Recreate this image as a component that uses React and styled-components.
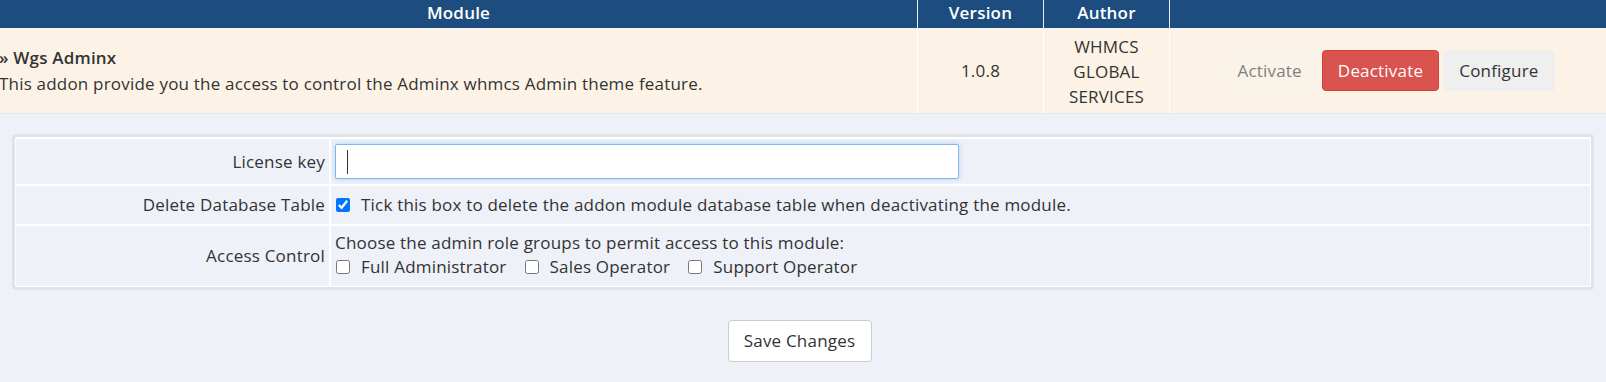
import React from "react";
import styled, { createGlobalStyle } from "styled-components";

const GlobalStyle = createGlobalStyle`
  html, body {
    margin: 0;
    padding: 0;
    background: #eef1f8;
    font-family: "Open Sans", "Liberation Sans", sans-serif;
    font-size: 17px;
    letter-spacing: 0.2px;
    color: #333;
  }
`;

const Page = styled.div`
  width: 1606px;
  overflow: hidden;
`;

const ModuleGrid = styled.div`
  display: grid;
  grid-template-columns: 917px 126px 126px 1fr;
  border-bottom: 1px solid #e6e9ef;
`;

const HeadCell = styled.div`
  background: #1c4d7e;
  color: #fff;
  font-weight: 600;
  text-align: center;
  height: 28px;
  line-height: 26px;
  border-left: ${(p) => (p.first ? "none" : "1px solid #e8edf3")};
  border-bottom: 1px solid #f3f3f3;
`;

const Cell = styled.div`
  background: #fcf3e6;
  height: 84px;
  display: flex;
  flex-direction: column;
  justify-content: center;
  align-items: ${(p) => (p.left ? "flex-start" : "center")};
  text-align: ${(p) => (p.left ? "left" : "center")};
  border-left: ${(p) => (p.left ? "none" : "1px solid #fff")};
  line-height: ${(p) => (p.tight ? "25px" : "26px")};
  padding: ${(p) => (p.left ? "0" : "0 8px")};
  margin-left: ${(p) => (p.left ? "-1px" : "0")};
`;

const Title = styled.div`
  font-weight: 600;
`;

const Actions = styled.div`
  display: flex;
  gap: 4px;
  margin-top: -1px;
`;

const Button = styled.button`
  font-family: inherit;
  font-size: 17px;
  letter-spacing: 0.2px;
  line-height: 25px;
  padding: 7px 15px;
  border-radius: 4px;
  border: 1px solid ${(p) => p.border};
  background: ${(p) => p.bg};
  color: ${(p) => p.fg};
  cursor: pointer;
`;

const FormBox = styled.div`
  margin: 20px 12px 0;
  border: 3px solid #dfe3e9;
  border-radius: 4px;
  background: #fff;
  padding: 2px 1px 1px;
  display: grid;
  grid-template-columns: 313px 1fr;
  gap: 2px;
`;

const Label = styled.div`
  background: #eef1f8;
  padding: 0 4px;
  display: flex;
  align-items: center;
  justify-content: flex-end;
`;

const Field = styled.div`
  background: #eef1f8;
  padding: 5px 4px;
  line-height: ${(p) => p.lh || "27px"};
`;

const TextInput = styled.input`
  display: block;
  box-sizing: border-box;
  width: 624px;
  height: 35px;
  border: 1px solid #7fb8ee;
  border-radius: 2px;
  background: linear-gradient(#333, #333) no-repeat 11px 5px / 1px 24px, #fff;
  box-shadow: 0 0 5px rgba(102, 175, 233, 0.45);
  outline: none;
  font-family: inherit;
  font-size: 17px;
  padding: 0 11px;
`;

const Check = styled.label`
  display: inline-flex;
  align-items: center;
  margin-right: ${(p) => p.gapRight || "0"};

  input {
    width: 14px;
    height: 14px;
    margin: 0 11px 0 1px;
    accent-color: #0075ff;
  }
`;

const Footer = styled.div`
  display: flex;
  justify-content: center;
  padding: 30px 7px 0 0;
`;

const SaveButton = styled.button`
  font-family: inherit;
  font-size: 17px;
  letter-spacing: 0.2px;
  color: #333;
  background: #fff;
  border: 1px solid #ccc;
  border-radius: 4px;
  width: 144px;
  height: 42px;
`;

export default function App() {
  return (
    <Page>
      <GlobalStyle />
      <ModuleGrid>
        <HeadCell first>Module</HeadCell>
        <HeadCell>Version</HeadCell>
        <HeadCell>Author</HeadCell>
        <HeadCell />
        <Cell left>
          <Title>» Wgs Adminx</Title>
          <div>This addon provide you the access to control the Adminx whmcs Admin theme feature.</div>
        </Cell>
        <Cell>1.0.8</Cell>
        <Cell tight>WHMCS GLOBAL SERVICES</Cell>
        <Cell>
          <Actions>
            <Button bg="#faf3e9" fg="#808080" border="#faf3e9">Activate</Button>
            <Button bg="#d9534f" fg="#fff" border="#d43f3a">Deactivate</Button>
            <Button bg="#efefef" fg="#333" border="#efefef">Configure</Button>
          </Actions>
        </Cell>
      </ModuleGrid>

      <FormBox>
        <Label>License key</Label>
        <Field>
          <TextInput type="text" />
        </Field>
        <Label>Delete Database Table</Label>
        <Field>
          <Check>
            <input type="checkbox" defaultChecked />
            Tick this box to delete the addon module database table when deactivating the module.
          </Check>
        </Field>
        <Label>Access Control</Label>
        <Field lh="24.5px">
          <div>Choose the admin role groups to permit access to this module:</div>
          <div>
            <Check gapRight="17px">
              <input type="checkbox" />
              Full Administrator
            </Check>
            <Check gapRight="17px">
              <input type="checkbox" />
              Sales Operator
            </Check>
            <Check>
              <input type="checkbox" />
              Support Operator
            </Check>
          </div>
        </Field>
      </FormBox>

      <Footer>
        <SaveButton>Save Changes</SaveButton>
      </Footer>
    </Page>
  );
}
